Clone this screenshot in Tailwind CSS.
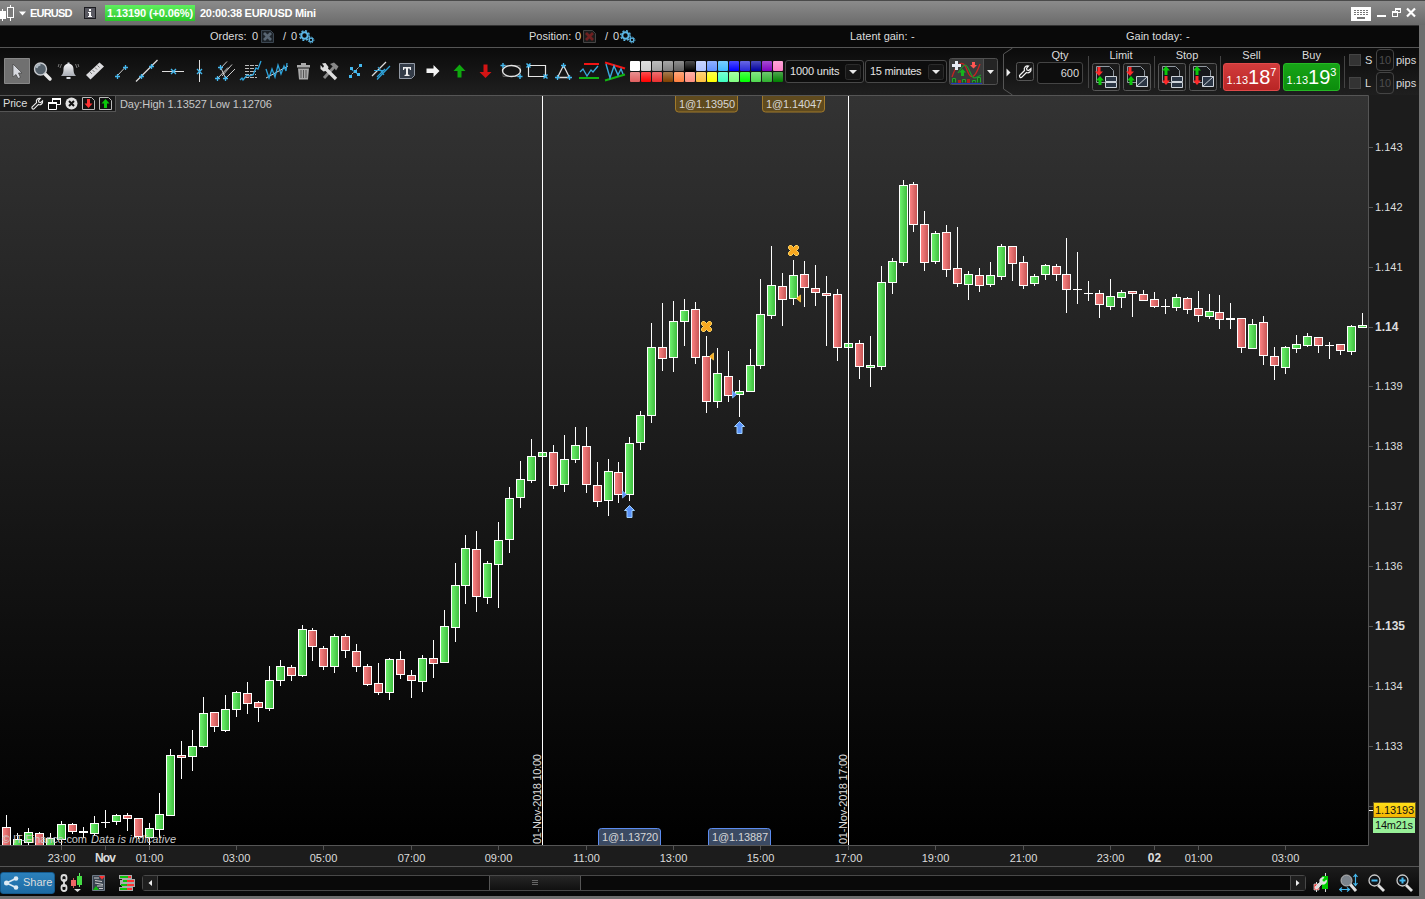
<!DOCTYPE html>
<html lang="en">
  <head>
    <meta charset="utf-8" />
    <meta name="viewport" content="width=device-width, initial-scale=1" />
    <title>EURUSD - 15 minutes</title>
    <script src="https://cdn.jsdelivr.net/npm/@tailwindcss/browser@4"></script>
  </head>
  <body class="bg-[#6e6e6e] overflow-hidden">
    <!-- Shared shapes -->
    <svg class="absolute h-0 w-0">
      <defs>
        <linearGradient id="metal" x1="0" y1="0" x2="0" y2="1">
          <stop offset="0" stop-color="#f4f4f6" />
          <stop offset="1" stop-color="#a8acb4" />
        </linearGradient>
        <g id="gears" fill="none" stroke="#5cb8e6">
          <circle cx="5.5" cy="5.5" r="3.2" stroke-width="2" />
          <circle cx="5.5" cy="5.5" r="4.8" stroke-width="1.4" stroke-dasharray="2 1.77" />
          <circle cx="12" cy="10" r="1.8" stroke-width="1.3" />
          <circle cx="12" cy="10" r="2.9" stroke-width="1" stroke-dasharray="1.3 .98" />
        </g>
        <path id="wrench" d="M1 11 L6 6 C5 3.5 7 1 10 1.5 L8 3.8 L8.5 5.5 L10.2 6 L12.5 4 C13 7 10.5 9 8 8 L3 13 Q1 13.5 1 11Z" />
        <path id="down" d="M2.5 0h3v4.5H8L4 9 0 4.5h2.5z" />
        <path id="up" d="M4 0l4 4.5H5.5V9h-3V4.5H0z" />
      </defs>
    </svg>

    <div class="flex h-[899px] w-[1425px] flex-col font-['Liberation_Sans',Arial,sans-serif] text-[11px] leading-none text-[#dcdcdc]">
      <!-- Title bar -->
      <header class="flex h-[25px] items-center border-t border-[#4a4a4a] bg-linear-to-b from-[#8b8b8b] to-[#6b6b6b] font-bold text-white">
        <svg class="h-[16px] w-[16px]" viewBox="0 0 16 16" shape-rendering="crispEdges">
          <path d="M2 4h1v12H2zM0 6h6v8H0zM10 0h1v16h-1z" fill="#fff" />
          <path d="M7.500 2.500h6v10h-6z" fill="#7b7b7b" stroke="#fff" />
        </svg>
        <svg class="ml-[3px] h-[5px] w-[8px]" viewBox="0 0 8 5"><path d="M0 .5h7L3.500 4.500z" fill="#fff" /></svg>
        <span class="ml-[3px] w-[54px] tracking-[-0.8px]">EURUSD</span>
        <svg class="h-[12px] w-[12px]" viewBox="0 0 12 12" shape-rendering="crispEdges">
          <path d="M.5.5h11v11H.5z" fill="#5a5a62" stroke="#1c1c20" />
          <path d="M5 2h2v2H5zM4 5h3v4h1v1H4V9h1V6H4z" fill="#fff" />
        </svg>
        <span class="ml-[9px] flex h-[16px] w-[90px] items-center justify-center whitespace-nowrap bg-linear-to-b from-[#5ff05f] to-[#27c627] tracking-[-0.1px]">1.13190 (+0.06%)</span>
        <span class="ml-[5px] tracking-[-0.28px]">20:00:38 EUR/USD Mini</span>
        <svg class="ml-auto mr-[7px] h-[16px] w-[67px]" viewBox="0 0 67 16" shape-rendering="crispEdges">
          <rect y="2" width="20" height="14" rx="1" fill="#fff" />
          <path d="M3 5.500h14M3 7.500h14M3 9.500h14" stroke="#777" stroke-dasharray="2 1" />
          <path d="M6 13h8" stroke="#777" stroke-width="2" />
          <path d="M26 10h9v2h-9z" fill="#fff" />
          <path d="M44.500 6V3.500h5v4H47" fill="none" stroke="#fff" />
          <path d="M44 4h6M41 7h6" stroke="#fff" stroke-width="2" />
          <path d="M41.500 6.500h5v5h-5z" fill="none" stroke="#fff" />
          <path d="M56 3.500l8 8M64 3.500l-8 8" stroke="#fff" stroke-width="2.200" shape-rendering="auto" />
        </svg>
      </header>

      <main class="flex h-[871px] w-[1419px] flex-col bg-[#1c1c1c]">
        <!-- Account summary -->
        <div class="flex h-[23px] items-center border-b border-t border-b-[#555] border-t-[#333] bg-[#090909]">
          <div class="flex w-[529px] items-center pl-[210px]">
            <span class="w-[42px]">Orders:</span><span class="w-[9px]">0</span>
            <svg class="h-[13px] w-[13px]" viewBox="0 0 13 13">
              <path d="M.5.5h9l3 3v9H.5z" fill="#1c2228" stroke="#3b4651" />
              <path d="M3 3l7 7M10 3l-7 7" stroke="#596673" stroke-width="2.800" />
            </svg>
            <span class="ml-[9px] w-[8px]">/</span><span class="w-[8px]">0</span>
            <svg class="h-[14px] w-[16px] shrink-0" viewBox="0 0 16 14"><use href="#gears" /></svg>
          </div>
          <div class="flex w-[321px] items-center">
            <span class="w-[46px]">Position:</span><span class="w-[8px]">0</span>
            <svg class="h-[13px] w-[13px]" viewBox="0 0 13 13">
              <path d="M.5.5h9l3 3v9H.5z" fill="#1c1c1c" stroke="#444" />
              <path d="M3 3l7 7M10 3l-7 7" stroke="#6e2020" stroke-width="2.800" />
            </svg>
            <span class="ml-[9px] w-[8px]">/</span><span class="w-[7px]">0</span>
            <svg class="h-[14px] w-[16px]" viewBox="0 0 16 14"><use href="#gears" /></svg>
          </div>
          <div class="flex w-[276px]"><span class="w-[61px]">Latent gain:</span><span>-</span></div>
          <div class="flex"><span class="w-[60px]">Gain today:</span><span>-</span></div>
        </div>

        <!-- Toolbar -->
        <div class="flex h-[47px] items-center bg-linear-to-b from-[#0b0b0b] to-[#1f1f1f]">
          <div class="flex w-[630px] pb-px pl-1 [&>svg]:h-[26px] [&>svg]:w-[26px] [&>svg]:shrink-0">
            <!-- pointer -->
            <svg viewBox="0 0 26 26">
              <path d="M.5.5h25v25H.5z" fill="#707070" stroke="#888" />
              <path d="M9 6v13l3-2.500 2 4 2.500-1-2-4.500h3.500z" fill="#d8dae0" stroke="#444" stroke-width=".7" />
            </svg>
            <!-- magnifier -->
            <svg viewBox="0 0 26 26">
              <path d="M14 15l6 6" stroke="#e8e8e8" stroke-width="3.500" stroke-linecap="round" />
              <circle cx="10.500" cy="11" r="6" fill="#54606a" stroke="#c6c9cd" stroke-width="1.400" />
              <path d="M6.500 10a4.500 4.500 0 0 1 4-3.500" stroke="#aab6c0" stroke-width="2" fill="none" />
            </svg>
            <!-- alarm -->
            <svg viewBox="0 0 26 26">
              <path d="M5 18c2-2 2.500-4 2.500-7 0-7 10-7 10 0 0 3 .5 5 2.500 7z" fill="url(#metal)" />
              <path d="M10.500 19h4v2h-4zM11.500 4.500h2v2h-2z" fill="#d8dbe2" />
              <path d="M5.500 6L4 10M3 6l-.8 3M19.500 6l1.500 4M22 6l.8 3" stroke="#777" fill="none" />
            </svg>
            <!-- ruler -->
            <svg viewBox="0 0 26 26">
              <path d="M4 17L17.500 4.500l4.500 4L8.500 21.500z" fill="#dcdcdf" />
              <path d="M8 14l2 2M10.500 12l2 2M13 9.500l2 2M15.500 7.500l2 2" stroke="#777" />
            </svg>
            <!-- segment -->
            <svg viewBox="0 0 26 26"><path d="M9 18l8-8.500" stroke="#ccc" /><path d="M7 18.500h5M9.500 16v5M15 9.500h5M17.500 7v5" stroke="#45b8ee" stroke-width="1.300" /></svg>
            <!-- line -->
            <svg viewBox="0 0 26 26"><path d="M2 23.500L23.500 2" stroke="#ddd" stroke-width="1.200" /><path d="M5 18.500h5M7.500 16v5M15 8.500h5M17.500 6v5" stroke="#45b8ee" stroke-width="1.300" /></svg>
            <!-- horizontal -->
            <svg viewBox="0 0 26 26"><path d="M2 13.500h22" stroke="#ddd" /><path d="M11 11l5 5M16 11l-5 5" stroke="#45b8ee" stroke-width="1.400" /></svg>
            <!-- vertical -->
            <svg viewBox="0 0 26 26"><path d="M13.500 2v22" stroke="#ddd" /><path d="M11 11l5 5M16 11l-5 5" stroke="#45b8ee" stroke-width="1.400" /></svg>
            <!-- pitchfork -->
            <svg viewBox="0 0 26 26">
              <path d="M5.500 20.500L16 9.500M13.500 20.500L23 11M8 11L15 3.500M10 18L20 6.500M8.500 9l5 11" stroke="#ccc" fill="none" />
              <path d="M3 20.500h5M5.500 18v5M11 20.500h5M13.500 18v5M6 9.500h5M8.500 7v5" stroke="#45b8ee" stroke-width="1.300" />
            </svg>
            <!-- volume profile -->
            <svg viewBox="0 0 26 26">
              <path d="M7 7.500h13M7 10.500h11M7 13.500h11M7 16.500h11M7 19.500h12" stroke="#bbb" stroke-width="1.200" stroke-dasharray="4 1" />
              <path d="M2 22l2-2 1 2 4-5 2 1 4-1 3-7 2 1 3-8" stroke="#2fa4dc" stroke-width="1.300" fill="none" />
            </svg>
            <!-- regression -->
            <svg viewBox="0 0 26 26">
              <path d="M2 20L24 8" stroke="#ddd" />
              <path d="M2 11l3 9 3-9 3 8 3-12 3 9 3-8 2 5 1-8" stroke="#2fa4dc" stroke-width="1.300" fill="none" />
            </svg>
            <!-- trash -->
            <svg viewBox="0 0 26 26">
              <path d="M7 7h13v2.500H7zM11 5h5v2h-5zM8 10.500h11l-1 11H9z" fill="#aaa" />
              <path d="M11 12v8M13.500 12v8M16 12v8" stroke="#555" />
            </svg>
            <!-- tools -->
            <svg viewBox="0 0 26 26">
              <path d="M8 20L19 8" stroke="#888" stroke-width="3" />
              <path d="M14 6l4-1.500 4.500 4-2.500 4-2-3z" fill="#888" />
              <path d="M8 9l12 12" stroke="#ddd" stroke-width="3.400" />
              <path d="M4.500 7v4l3 2.500 4-1 1-3.500-3-4-3.500.5 2 2.500-1 2z" fill="#ddd" />
            </svg>
            <!-- squares on diagonal -->
            <svg viewBox="0 0 26 26">
              <path d="M8 18L19 7" stroke="#ccc" stroke-dasharray="2 1" /><path d="M8 10.500l9 6.500" stroke="#2fa4dc" />
              <path d="M17 6h3v3h-3zM7 17h3v3H7zM15 15h3v3h-3zM12 12h3v3h-3zM8 9h3v3H8z" fill="#45b8ee" />
            </svg>
            <!-- parallel lines -->
            <svg viewBox="0 0 26 26">
              <path d="M4 18L18 4" stroke="#ddd" stroke-width="1.200" /><path d="M9 21.500L22 8M6 12.500h10M10 9l6 8M9 19l8-8" stroke="#2fa4dc" stroke-width="1.200" />
            </svg>
            <!-- text -->
            <svg viewBox="0 0 26 26">
              <path d="M5.500 5.500h15v12l-3 3h-12z" fill="#343c48" stroke="#9299a4" />
              <path d="M9 9h8v3h-1l-.5-1.500H14v6l1.500.5v1h-5v-1l1.500-.5v-6h-1.500L10 12H9z" fill="#eee" />
            </svg>
            <svg viewBox="0 0 26 26"><path d="M6.500 10.500h7V7l6 6-6 6v-4h-7z" fill="#f4f4f4" /></svg>
            <svg viewBox="0 0 26 26"><path d="M13.500 6.500l6 6.500h-4v6.500h-4V13h-4z" fill="#0fa80f" /></svg>
            <svg viewBox="0 0 26 26"><path d="M11.500 6.500h4V14h4l-6 6-6-6h4z" fill="#d41414" /></svg>
            <!-- ellipse -->
            <svg viewBox="0 0 26 26">
              <path d="M5 7.500h17v11H5z" fill="none" stroke="#555" /><ellipse cx="13.500" cy="13" rx="9" ry="5.500" fill="none" stroke="#e5e5e5" stroke-width="1.300" />
              <path d="M2.500 7.500h5M5 5v5M19.500 18.500h5M22 16v5" stroke="#45b8ee" stroke-width="1.400" />
            </svg>
            <!-- rectangle -->
            <svg viewBox="0 0 26 26">
              <path d="M4.500 7.500h17v11h-17z" fill="none" stroke="#e5e5e5" stroke-width="1.200" />
              <path d="M2.500 5.500l4 4M6.500 5.500l-4 4M19.500 16.500l4 4M23.500 16.500l-4 4" stroke="#45b8ee" stroke-width="1.500" />
            </svg>
            <!-- triangle -->
            <svg viewBox="0 0 26 26">
              <path d="M13.500 7.500L7.500 19.500h12z" fill="none" stroke="#ddd" stroke-width="1.300" />
              <path d="M11 7.500h5M13.500 5v5M5 19.500h5M7.500 17v5M17 19.500h5M19.500 17v5" stroke="#45b8ee" stroke-width="1.300" />
            </svg>
            <!-- range -->
            <svg viewBox="0 0 26 26">
              <path d="M8 6h15" stroke="#f21313" stroke-width="2" /><path d="M3 20h20" stroke="#12b512" stroke-width="2" />
              <path d="M4 14l3-3 4 7 4-6 2 2 5-6" stroke="#3ba9dc" stroke-width="1.300" fill="none" />
            </svg>
            <!-- wedge -->
            <svg viewBox="0 0 26 26">
              <path d="M3 4.500l20 6" stroke="#f21313" stroke-width="2" /><path d="M3 22.500l20-6" stroke="#12b512" stroke-width="2" />
              <path d="M4 6l4 14 4-12 4 9 3-6 2 5" stroke="#3ba9dc" stroke-width="1.400" fill="none" />
            </svg>
          </div>

          <div id="palette" class="grid w-[155px] grid-cols-[repeat(14,10px)] gap-px [&>i]:h-[10px] [&>i]:rounded-[1px] [&>i]:bg-linear-to-b [&>i]:from-white/30 [&>i]:to-transparent"></div>

          <div class="flex h-[23px] w-[79px] items-center justify-between rounded-[3px] border border-[#484848] bg-[#0d0d0d] pl-[4px] pr-[2px] tracking-[-0.15px] text-[#e4e4e4]">
            1000 units
            <svg class="h-[16px] w-[16px]" viewBox="0 0 16 16"><rect x=".5" y=".5" width="15" height="15" rx="2" fill="#161616" stroke="#2c2c2c" /><path d="M4 6h8l-4 4z" fill="#e8e8e8" /></svg>
          </div>
          <div class="ml-px flex h-[23px] w-[82px] items-center justify-between rounded-[3px] border border-[#484848] bg-[#0d0d0d] pl-[4px] pr-[2px] tracking-[-0.25px] text-[#e4e4e4]">
            15 minutes
            <svg class="h-[16px] w-[16px]" viewBox="0 0 16 16"><rect x=".5" y=".5" width="15" height="15" rx="2" fill="#161616" stroke="#2c2c2c" /><path d="M4 6h8l-4 4z" fill="#e8e8e8" /></svg>
          </div>
          <svg class="ml-[2px] h-[27px] w-[49px]" viewBox="0 0 49 27">
            <rect x=".5" y=".5" width="48" height="26" rx="2" fill="#242424" stroke="#505050" />
            <path d="M1 1h33v25H1z" fill="#3a3a3a" /><path d="M34.500 1v25" stroke="#505050" />
            <path d="M3 19C8 4 14 1 18 12s8 8 13-6" stroke="#c62323" stroke-width="1.300" fill="none" />
            <path d="M9 15C16 4 17 5 21 14s5 6 11 3" stroke="#1b9a2a" stroke-width="1.200" fill="none" />
            <path d="M7.500 3v9M3 7.500h9" stroke="#e6e9f2" stroke-width="3" />
            <path d="M13.500 11l3.500 3.500h-2V18h-3v-3.500h-2z" fill="#16b51c" /><path d="M23 4h3v3h2l-3.500 3.500L21 7h2z" fill="#ff5552" />
            <path d="M3.500 24.500v-4h3v4M13.500 24.500v-3h3v3M23.500 24.500v-2h3v2M28.500 24.500v-5h3v5" fill="#145b18" stroke="#23a52b" />
            <path d="M9 22h3v3H9zM18 21h3v4h-3z" fill="#a22" /><path d="M2 25.500h31" stroke="#2338b8" />
            <path d="M38 12h7l-3.500 4z" fill="#eee" />
          </svg>

          <svg class="ml-[5px] h-[47px] w-[10px]" viewBox="0 0 10 47">
            <path d="M9.500 0L.5 6v35l9 6" fill="none" stroke="#555" /><path d="M3.500 20.500l4 4-4 4z" fill="#eee" />
          </svg>

          <!-- Order entry -->
          <svg class="ml-[3px] h-[19px] w-[18px]" viewBox="0 0 18 19">
            <rect x=".5" y=".5" width="17" height="18" rx="2" fill="#161616" stroke="#555" /><use href="#wrench" x="2.500" y="2.500" fill="none" stroke="#f4f4f4" stroke-width="1.200" />
          </svg>
          <div class="ml-[3px] flex h-[47px] w-[46px] flex-col items-center pt-[2px]">
            <span>Qty</span>
            <div class="mt-px flex h-[22px] w-full items-center justify-end rounded-[3px] border border-[#444] bg-[#0d0d0d] pr-[3px]">600</div>
          </div>
          <i class="ml-[5px] h-[32px] w-px bg-[#444]"></i>
          <div class="ml-[2px] flex h-[47px] w-[60px] flex-col items-center pt-[2px]">
            <span>Limit</span>
            <div class="mt-[2px] flex gap-[3px] [&>svg]:h-[28px] [&>svg]:w-[28px]">
              <svg viewBox="0 0 28 28"><rect x=".5" y=".5" width="27" height="27" rx="2" fill="#1b1b1b" stroke="#565656" /><path d="M4.500 3.500h13l4 4v12h-17z" fill="#16181b" stroke="#9098a0" /><use href="#down" x="3" y="4" fill="#ff2a2a" /><use href="#up" x="4" y="13" fill="#0cc80c" /><path d="M13.500 13.500h11v5h-11zM13.500 19.500h11v5h-11z" fill="#2b3645" stroke="#cdd3da" /></svg>
              <svg viewBox="0 0 28 28"><rect x=".5" y=".5" width="27" height="27" rx="2" fill="#1b1b1b" stroke="#565656" /><path d="M4.500 3.500h13l4 4v12h-17z" fill="#16181b" stroke="#9098a0" /><use href="#down" x="3" y="4" fill="#ff2a2a" /><use href="#up" x="4" y="13" fill="#0cc80c" /><path d="M13.500 13.500h11v10h-11z" fill="#2b3645" stroke="#cdd3da" /><path d="M13.500 23.500l11-10" stroke="#cdd3da" /></svg>
            </div>
          </div>
          <i class="ml-[3px] h-[32px] w-px bg-[#444]"></i>
          <div class="ml-[2px] flex h-[47px] w-[60px] flex-col items-center pt-[2px]">
            <span>Stop</span>
            <div class="mt-[2px] flex gap-[3px] [&>svg]:h-[28px] [&>svg]:w-[28px]">
              <svg viewBox="0 0 28 28"><rect x=".5" y=".5" width="27" height="27" rx="2" fill="#1b1b1b" stroke="#565656" /><path d="M4.500 3.500h13l4 4v12h-17z" fill="#16181b" stroke="#9098a0" /><use href="#up" x="4" y="3" fill="#0cc80c" /><use href="#down" x="4" y="13" fill="#ff2a2a" /><path d="M13.500 13.500h11v5h-11zM13.500 19.500h11v5h-11z" fill="#2b3645" stroke="#cdd3da" /></svg>
              <svg viewBox="0 0 28 28"><rect x=".5" y=".5" width="27" height="27" rx="2" fill="#1b1b1b" stroke="#565656" /><path d="M4.500 3.500h13l4 4v12h-17z" fill="#16181b" stroke="#9098a0" /><use href="#up" x="4" y="3" fill="#0cc80c" /><use href="#down" x="4" y="13" fill="#ff2a2a" /><path d="M13.500 13.500h11v10h-11z" fill="#2b3645" stroke="#cdd3da" /><path d="M13.500 23.500l11-10" stroke="#cdd3da" /></svg>
            </div>
          </div>
          <i class="ml-[3px] h-[32px] w-px bg-[#444]"></i>
          <div class="ml-[2px] flex h-[47px] w-[57px] flex-col items-center pt-[2px]">
            <span>Sell</span>
            <div class="mt-[2px] flex h-[28px] w-full items-end justify-center rounded-[3px] border border-[#e04a4a] bg-linear-to-b from-[#d23c3c] to-[#b92525] pb-[4px] text-white">
              <span class="text-[11px]">1.13</span><span class="text-[20px] leading-[18px]">18</span><span class="mb-[8px] text-[11px]">7</span>
            </div>
          </div>
          <div class="ml-[3px] flex h-[47px] w-[57px] flex-col items-center pt-[2px]">
            <span>Buy</span>
            <div class="mt-[2px] flex h-[28px] w-full items-end justify-center rounded-[3px] border border-[#25b825] bg-linear-to-b from-[#17a417] to-[#0c8d0c] pb-[4px] text-white">
              <span class="text-[11px]">1.13</span><span class="text-[20px] leading-[18px]">19</span><span class="mb-[8px] text-[11px]">3</span>
            </div>
          </div>
          <i class="ml-[4px] h-[32px] w-px bg-[#444]"></i>
          <div class="ml-[4px] flex flex-col">
            <div class="flex h-[23px] items-center"><i class="h-[12px] w-[12px] border border-[#444] bg-[#333]"></i><span class="ml-[4px] w-[11px]">S</span><span class="flex h-[22px] w-[18px] items-center justify-center rounded-[4px] border border-[#444] text-[#4c4c4c]">10</span><span class="ml-[2px]">pips</span></div>
            <div class="flex h-[23px] items-center"><i class="h-[12px] w-[12px] border border-[#444] bg-[#333]"></i><span class="ml-[4px] w-[11px]">L</span><span class="flex h-[22px] w-[18px] items-center justify-center rounded-[4px] border border-[#444] text-[#4c4c4c]">10</span><span class="ml-[2px]">pips</span></div>
          </div>
        </div>

        <!-- Chart -->
        <div class="relative h-[771px]">
          <svg id="chart" class="block h-[771px] w-[1419px]" viewBox="0 95 1419 771">
            <defs>
              <linearGradient id="bg" x1="0" y1="0" x2="0" y2="1"><stop offset="0" stop-color="#333" /><stop offset="1" stop-color="#000" /></linearGradient>
              <linearGradient id="bull"><stop offset="0" stop-color="#6df06d" /><stop offset="1" stop-color="#3fbf3f" /></linearGradient>
              <linearGradient id="bear"><stop offset="0" stop-color="#fa8282" /><stop offset="1" stop-color="#c85656" /></linearGradient>
              <linearGradient id="last" x1="0" y1="0" x2="0" y2="1"><stop offset="0" stop-color="#ffe01a" /><stop offset="1" stop-color="#f5b400" /></linearGradient>
              <g id="buyMark"><path d="M0 0.500l5 5H2.500v7h-5v-7H-5z" fill="#5b93f8" stroke="#9fd0ff" /></g>
              <path id="exitMark" d="M-4-5h2l2 2 2-2h2l1 1v2L3 0l2 2v2L4 5H2L0 3l-2 2h-2l-1-1V2l2-2-2-2v-2z" fill="#f8a820" stroke="#ffd868" />
            </defs>
            <rect y="95" width="1419" height="771" fill="#1c1c1c" />
            <rect y="95" width="1368" height="750" fill="url(#bg)" />
            <path d="M0 95.500h1368.500v750H0" fill="none" stroke="#555" />
            <g id="candles" shape-rendering="crispEdges"></g>
            <path d="M542.500 96v749M848.500 96v749" stroke="#fff" />
            <g id="axis" fill="#dcdcdc" font-size="11"></g>
            <g fill="#dcdcdc" font-size="11">
              <text transform="translate(541 844) rotate(-90)" textLength="90">01-Nov-2018 10:00</text>
              <text transform="translate(847 844) rotate(-90)" textLength="90">01-Nov-2018 17:00</text>
              <text x="2" y="843" fill="#ccc" textLength="85">© IT-Finance.com</text>
              <text x="91" y="843" fill="#ccc" font-style="italic" textLength="85">Data is indicative</text>
            </g>
            <!-- executions -->
            <use href="#buyMark" x="629.500" y="505" /><use href="#buyMark" x="739.500" y="421" />
            <use href="#exitMark" x="706.500" y="326.500" /><use href="#exitMark" x="793.500" y="250.500" />
            <path d="M622.500 491v7l4-3.500zM732.500 391v7l4-3.500z" fill="#5b93f8" stroke="#8cc0ff" stroke-width=".8" />
            <path d="M713.500 353v7l-4-3.500zM800.500 295v7l-4-3.500z" fill="#f8a820" stroke="#ffd050" stroke-width=".8" />
            <g fill="#5f4a1e" stroke="#a17a2b">
              <path d="M675.500 96v13q0 3 3 3h56q3 0 3-3V96M762.500 96v13q0 3 3 3h56q3 0 3-3V96" />
            </g>
            <g fill="#3b4a63" stroke="#5c8cf0">
              <path d="M598.500 845v-14q0-2.500 3-2.500h56q3 0 3 2.500v14M708.500 845v-14q0-2.500 3-2.500h56q3 0 3 2.500v14" />
            </g>
            <g fill="#d6d6d6" font-size="11">
              <text x="679" y="108" textLength="56">1@1.13950</text><text x="766" y="108" textLength="56">1@1.14047</text>
              <text x="602" y="841" textLength="56">1@1.13720</text><text x="712" y="841" textLength="56">1@1.13887</text>
            </g>
            <!-- last price -->
            <path d="M1369 806.500h4" stroke="#555" /><path d="M1369 810.500h4" stroke="#fff" />
            <rect x="1373.500" y="802.500" width="42" height="15" fill="url(#last)" stroke="#6b5a20" />
            <rect x="1373" y="818" width="42" height="15" fill="#98f098" />
            <g fill="#111" font-size="11"><text x="1375" y="814" textLength="39">1.13193</text><text x="1375" y="829" textLength="38">14m21s</text></g>
          </svg>
          <div class="absolute left-0 top-px flex h-[16px] items-center">
            <div class="flex h-[16px] w-[116px] items-center gap-[4px] border-b border-r border-[#555] bg-[#181818] pl-[3px] [&>svg]:h-[13px] [&>svg]:w-[13px]">
              <span class="w-[24px] tracking-[-0.2px]">Price</span>
              <svg viewBox="0 0 14 14"><use href="#wrench" fill="none" stroke="#eee" stroke-width="1.200" /></svg>
              <svg viewBox="0 0 13 13"><path d="M4.500 1.500h8v6h-8z" fill="#111" stroke="#fff" /><path d="M4 2h9" stroke="#fff" stroke-width="2" /><path d="M.5 5.500h8v7h-8z" fill="#111" stroke="#fff" /><path d="M0 6h9" stroke="#fff" stroke-width="2" /></svg>
              <svg viewBox="0 0 13 13"><circle cx="6.500" cy="6.500" r="6" fill="#e0e0e0" /><path d="M4 4l5 5M9 4l-5 5" stroke="#111" stroke-width="2" /></svg>
              <svg viewBox="0 0 13 13"><path d="M.5.5h9l3 3v9H.5z" fill="#111" stroke="#bbb" /><use href="#down" x="2.500" y="2" fill="#f33" /></svg>
              <svg viewBox="0 0 13 13"><path d="M.5.5h9l3 3v9H.5z" fill="#111" stroke="#bbb" /><use href="#up" x="2.500" y="2" fill="#0cc80c" /></svg>
            </div>
            <span class="ml-[4px] whitespace-nowrap tracking-[-0.08px] text-[#c8c8c8]">Day:High 1.13527 Low 1.12706</span>
          </div>
        </div>

        <!-- Bottom bar -->
        <footer class="flex h-[30px] items-center border-t border-[#555] bg-linear-to-b from-[#1c1c1c] to-[#080808] pt-[2px]">
          <button class="flex h-[22px] w-[55px] items-center rounded-[3px] border border-[#14598c] bg-linear-to-b from-[#2b80bb] to-[#1d6ba4] pl-[3px]">
            <svg class="h-[14px] w-[15px]" viewBox="0 0 15 14"><path d="M12 2.500L2.500 7l9.500 4.500" fill="none" stroke="#ddeaf4" stroke-width="1.600" /><g fill="#ddeaf4"><circle cx="12" cy="2.500" r="2.300" /><circle cx="2.500" cy="7" r="2.500" /><circle cx="12" cy="11.500" r="2.300" /></g></svg>
            <span class="ml-[4px]">Share</span>
          </button>
          <svg class="ml-[4px] h-[20px] w-[24px]" viewBox="0 0 24 20">
            <g fill="none" stroke="#ddd" stroke-width="1.800"><rect x="2.500" y="2" width="5" height="6" rx="2.500" /><rect x="2.500" y="12" width="5" height="6" rx="2.500" /><path d="M5 6v8" /></g>
            <path d="M14.500 5v10" stroke="#c55" /><path d="M12 7h5v6h-5z" fill="#e66" /><path d="M20.500 0v14" stroke="#6e6" /><path d="M18 3h5v9h-5z" fill="#4d4" />
            <path d="M15 16h7l-3.500 3z" fill="#ddd" />
          </svg>
          <svg class="ml-[9px] h-[16px] w-[14px]" viewBox="0 0 14 16">
            <path d="M.5.5h12v15H.5z" fill="#39434f" stroke="#6d7885" /><path d="M2 3h5M3 5.500l7 1M3 8l8 1.500M5 11h6M7 13.500h4" stroke="#ccc" stroke-width="1.200" /><path d="M7 1h6L10 4.500z" fill="#f33" /><path d="M1 15h6l-3-4z" fill="#1b1" />
          </svg>
          <svg class="ml-[13px] h-[16px] w-[16px]" viewBox="0 0 16 16">
            <path d="M0 0h13v4h3v8h-2v4H0v-4h3v-2H1V5h2V4H0z" fill="#aaa" />
            <path d="M1 1h8v2H1zM4 5h4v2H4zM2 9h6v2H2zM1 13h7v2H1z" fill="#0bc40b" /><path d="M9 1h3v2H9zM8 5h7v2H8zM8 9h7v2H8zM8 13h5v2H8z" fill="#f33" />
          </svg>
          <!-- scrollbar -->
          <div class="ml-[7px] flex h-[16px] w-[1164px] justify-between rounded-[3px] border border-[#484848] bg-[#090909]">
            <svg class="h-[14px] w-[15px]" viewBox="0 0 15 14"><path d="M0 0h15v14H0z" fill="#1e1e1e" /><path d="M14.500 0v14" stroke="#484848" /><path d="M9 4v6L5.500 7z" fill="#eee" /></svg>
            <div class="mr-[378px] flex w-[92px] flex-col items-center justify-center gap-px border-x border-[#555] bg-linear-to-b from-[#262626] to-[#101010]">
              <i class="h-px w-[6px] bg-[#666]"></i><i class="h-px w-[6px] bg-[#666]"></i><i class="h-px w-[6px] bg-[#666]"></i>
            </div>
            <svg class="h-[14px] w-[15px]" viewBox="0 0 15 14"><path d="M0 0h15v14H0z" fill="#1e1e1e" /><path d="M.5 0v14" stroke="#484848" /><path d="M6 4v6l3.500-3z" fill="#eee" /></svg>
          </div>
          <svg class="ml-[6px] h-[20px] w-[18px]" viewBox="0 0 18 20">
            <path d="M4.500 9v10M13.500 0v19" stroke="#ddd" /><path d="M2 11h5v6H2z" fill="#e33" stroke="#ddd" stroke-width=".7" /><path d="M10 3h6v13h-6z" fill="#0c0" />
            <use href="#wrench" x="2" y="3" fill="#ddd" stroke="#fff" stroke-width=".6" />
          </svg>
          <svg class="ml-[9px] h-[20px] w-[20px]" viewBox="0 0 20 20">
            <path d="M11 11l6 7" stroke="#ddd" stroke-width="3" /><circle cx="7.500" cy="7.500" r="5.500" fill="#7c848c" stroke="#bbb" />
            <path d="M16.500 2v10M14.500 4l2-2.500 2 2.500M14.500 10l2 2.500 2-2.500M1 16.500h9M3 14.500l-2.500 2 2.500 2M8 14.500l2.500 2-2.500 2" stroke="#45b8ee" fill="none" stroke-width="1.200" />
          </svg>
          <svg class="ml-[8px] h-[20px] w-[20px]" viewBox="0 0 20 20"><path d="M11 12l6 6" stroke="#ddd" stroke-width="2.800" /><circle cx="7.500" cy="7.500" r="5.500" fill="#101418" stroke="#ccc" stroke-width="1.300" /><path d="M4.500 7.500h6" stroke="#45b8ee" stroke-width="2" /></svg>
          <svg class="ml-[8px] h-[20px] w-[20px]" viewBox="0 0 20 20"><path d="M11 12l6 6" stroke="#ddd" stroke-width="2.800" /><circle cx="7.500" cy="7.500" r="5.500" fill="#101418" stroke="#ccc" stroke-width="1.300" /><path d="M4.500 7.500h6M7.500 4.500v6" stroke="#45b8ee" stroke-width="2" /></svg>
        </footer>
      </main>
    </div>

    <script>
      // x centre, direction (u/d/n), high, body top, body bottom, low
      const candles = `
        6 d 815 827 850 850|17 u 833 839 850 850|28 u 828 832 843 845|39 d 832 833 850 850|50 u 833 838 850 850
        61 u 821 824 840 845|72 d 823 824 832 834|83 n 827 831 833 838|94 u 816 823 834 836|105 n 810 822 823 828
        116 u 814 815 822 825|127 d 813 815 819 831|138 d 818 818 837 839|149 u 823 828 838 845|159 u 793 814 830 838
        170 u 749 755 816 816|181 d 741 755 758 779|192 u 730 746 757 771|203 u 697 713 747 748|214 d 712 712 727 732
        225 u 695 709 731 732|236 u 691 692 710 717|247 d 682 693 704 714|258 d 701 702 708 722|269 u 666 680 709 711
        280 u 660 666 681 686|291 d 665 667 676 681|302 u 625 629 676 677|312 d 628 630 647 661|323 d 646 648 667 670
        334 u 634 636 667 673|345 d 634 636 651 658|356 d 644 651 667 672|367 d 664 666 685 686|378 d 663 683 693 695
        389 u 658 659 693 700|400 d 651 659 675 679|411 d 670 675 681 698|422 u 655 658 682 692|433 d 640 658 664 678
        444 u 610 626 663 663|455 u 563 585 628 642|465 u 535 548 586 604|476 d 531 549 597 612|487 u 561 563 598 604
        498 u 522 540 565 608|509 u 487 498 540 553|520 u 461 479 498 508|531 u 439 456 481 483|542 u 452 452 457 457
        553 d 445 452 486 489|564 u 435 459 485 492|575 u 427 445 460 463|586 d 427 446 485 493|597 d 462 485 502 507
        608 u 459 471 501 516|618 d 462 472 495 503|629 u 437 443 495 501|640 u 411 415 443 450|651 u 323 347 416 423
        662 d 303 347 359 371|673 u 301 321 358 372|684 u 299 310 322 346|695 d 302 309 358 364|706 d 336 356 402 413
        717 u 348 373 402 408|728 d 351 376 396 402|739 u 380 391 395 417|750 u 349 365 392 392|760 u 279 314 366 369
        771 u 246 285 316 319|782 d 273 286 300 326|793 u 260 275 299 305|804 d 261 274 288 307|815 d 265 288 293 306
        826 d 276 293 296 346|837 d 289 294 348 361|848 u 343 343 348 348|859 d 340 343 367 379|870 u 336 365 368 387
        881 u 266 282 367 370|892 u 258 261 283 294|903 u 180 185 263 266|913 d 182 184 225 232|924 d 211 224 263 271
        935 u 231 233 262 264|946 d 225 232 270 277|957 d 227 268 284 287|968 u 271 274 285 300|979 d 268 275 286 292
        990 u 262 275 285 287|1001 u 244 246 277 280|1012 d 246 246 264 281|1023 d 256 262 286 289|1034 u 274 276 284 286
        1045 u 264 265 275 280|1056 d 264 266 275 281|1066 d 238 274 290 313|1077 n 252 289 290 304|1088 n 281 293 294 301
        1099 d 290 293 305 318|1110 u 279 296 307 310|1121 u 290 292 298 308|1132 d 291 291 294 317|1143 d 290 294 301 301
        1154 d 292 299 307 308|1165 n 299 306 307 314|1176 u 294 297 308 311|1187 d 297 298 310 314|1198 d 291 308 316 322
        1209 u 294 311 317 319|1219 d 295 312 320 329|1230 n 303 318 320 329|1241 d 318 318 348 353|1252 u 319 324 349 349
        1263 d 316 322 356 365|1274 d 347 356 366 380|1285 u 346 347 368 374|1296 u 335 344 349 353|1307 u 333 336 346 347
        1318 d 337 337 346 353|1329 n 342 345 346 359|1340 d 344 344 351 355|1351 u 325 326 352 355|1362 u 313 325 328 328`;

      let out = "";
      candles.trim().split(/\||\n/).forEach((row) => {
        const [cx, dir, hi, top, bot, lo] = row.trim().split(" ");
        const x = cx - 4;
        const low = Math.min(lo, 845);
        const bottom = Math.min(bot, 846);
        out += `<path d="M${cx} ${hi}h1V${low}h-1z M${x} ${top}h9V${Math.min(bottom, 845)}h-9z" fill="#fff"/>`;
        if (dir !== "n") {
          out += `<rect x="${x + 1}" y="${+top + 1}" width="7" height="${bottom - top - 2}" fill="url(#${dir === "u" ? "bull" : "bear"})"/>`;
        }
      });
      document.getElementById("candles").innerHTML = out;

      // price and time scales
      let axis = "";
      ["1.143", "1.142", "1.141", "1.14", "1.139", "1.138", "1.137", "1.136", "1.135", "1.134", "1.133"].forEach((p, i) => {
        const y = Math.round(147 + i * 59.87);
        const bold = p === "1.14" || p === "1.135";
        axis += `<path d="M1369 ${y + 0.5}h4" stroke="#555"/><text x="1375" y="${y + 4}" ${bold ? 'font-weight="bold" font-size="12"' : ""}>${p}</text>`;
      });
      [[61, "23:00"], [105, "Nov"], [149, "01:00"], [236, "03:00"], [323, "05:00"], [411, "07:00"], [498, "09:00"], [586, "11:00"],
       [673, "13:00"], [760, "15:00"], [848, "17:00"], [935, "19:00"], [1023, "21:00"], [1110, "23:00"], [1154, "02"], [1198, "01:00"], [1285, "03:00"],
      ].forEach(([x, t]) => {
        const bold = t === "Nov" || t === "02";
        axis += `<path d="M${x + 0.5} 846v4" stroke="#555"/><text x="${x + 0.5}" y="862" text-anchor="middle" ${bold ? 'font-weight="bold" font-size="12"' : ""} ${t === "Nov" ? 'textLength="21"' : ""}>${t}</text>`;
      });
      document.getElementById("axis").innerHTML = axis;

      // drawing colours
      const colors = ["#fff", "#d0d0d0", "#a0a0a0", "#808080", "#606060", "#000", "#b0c4ff", "#6090ff", "#40b8ff", "#0000ff", "#2828d8", "#0000a0", "#8000c0", "#ff80c8",
        "#e06060", "#ff0000", "#e83030", "#804000", "#ff8040", "#ff9080", "#ffc040", "#ffff00", "#40ffc0", "#80ff80", "#00ff00", "#50d850", "#30b030", "#008000"];
      document.getElementById("palette").innerHTML = colors
        .map((c) => `<i style="background-color:${c}"${c === "#000" ? ' class="relative outline-1 outline-black"' : ""}></i>`)
        .join("");
    </script>
  </body>
</html>
